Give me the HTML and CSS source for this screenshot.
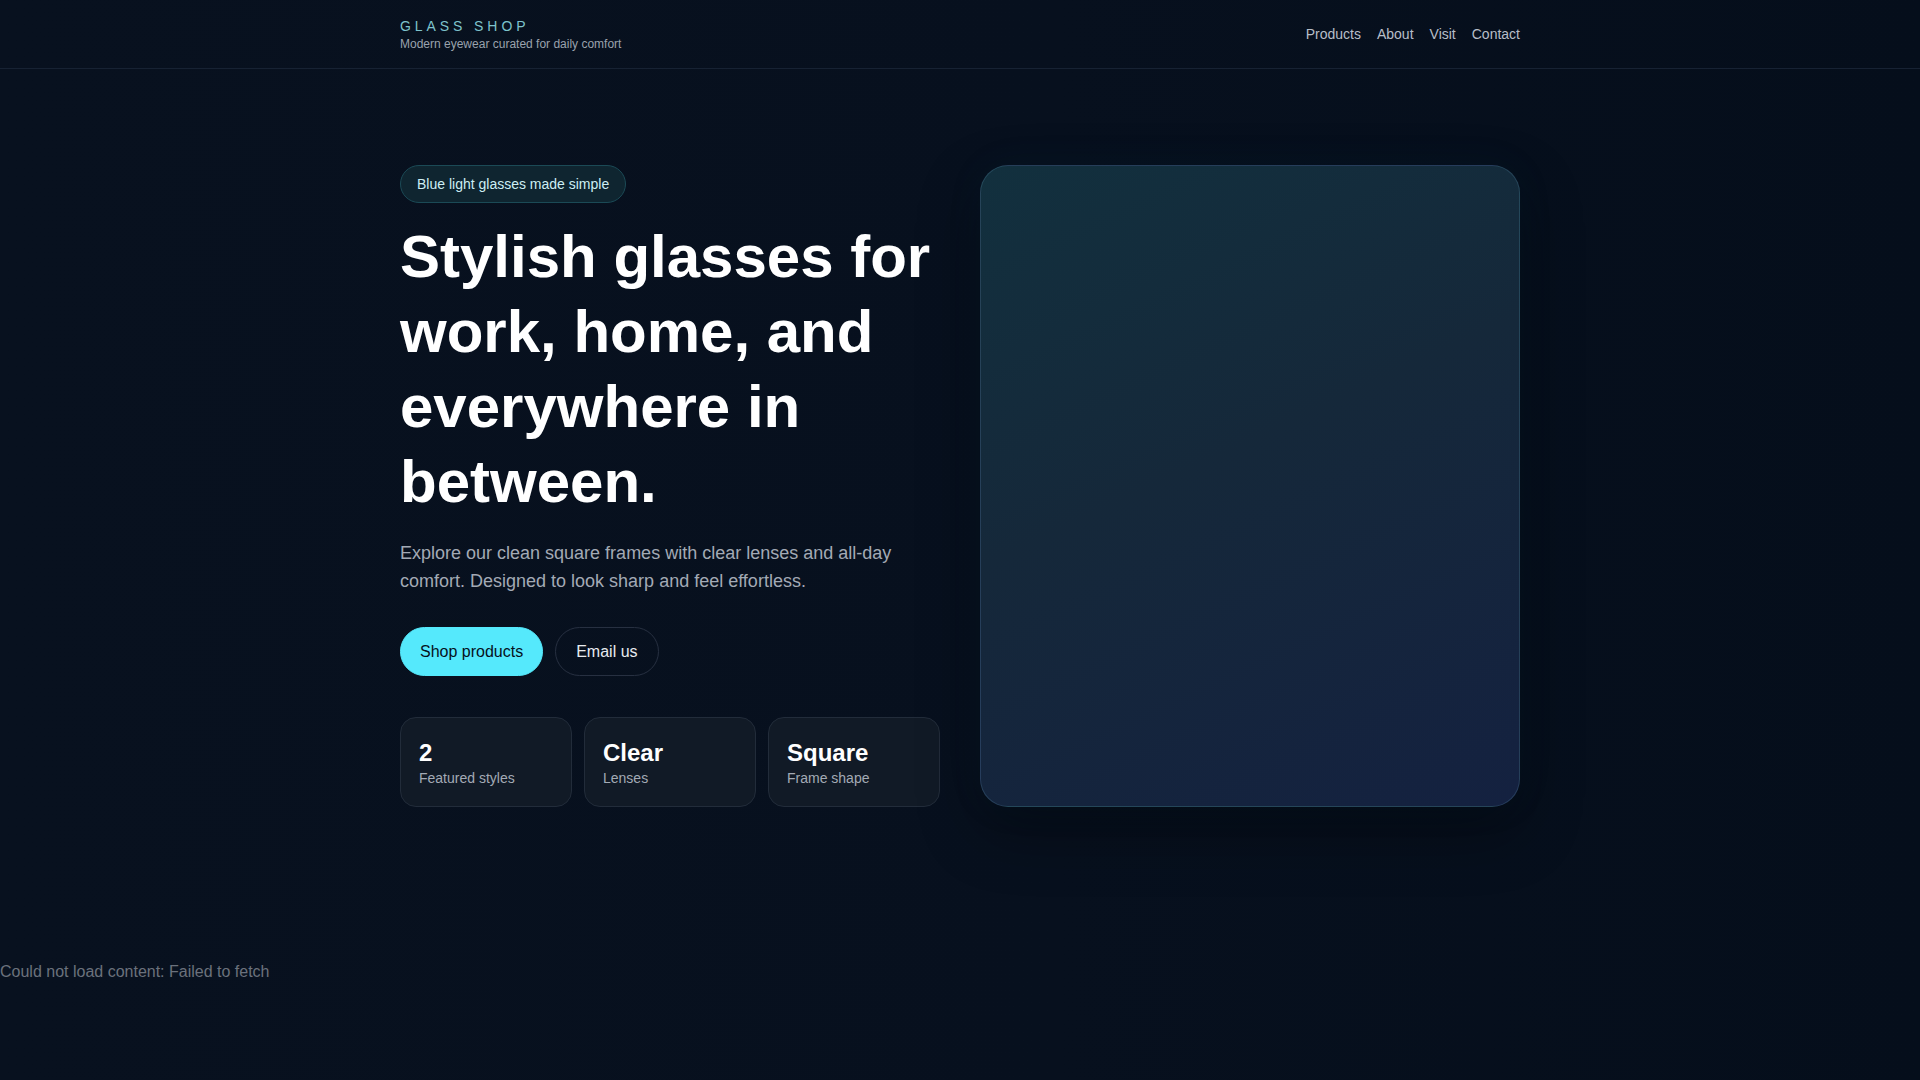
FILE: index.html
```html
<!DOCTYPE html>
<html lang="en">
<head>
<meta charset="utf-8">
<title>Glass Shop</title>
<link rel="stylesheet" href="styles.css">
</head>
<body>
<header class="site-header">
  <div class="container header-inner">
    <div class="brand">
      <div class="brand-name">GLASS SHOP</div>
      <div class="brand-tag">Modern eyewear curated for daily comfort</div>
    </div>
    <nav class="nav">
      <a href="#products">Products</a>
      <a href="#about">About</a>
      <a href="#visit">Visit</a>
      <a href="#contact">Contact</a>
    </nav>
  </div>
</header>
<main class="hero">
  <div class="container hero-grid">
    <div class="hero-copy">
      <span class="badge">Blue light glasses made simple</span>
      <h1 class="hero-title">Stylish glasses for work, home, and everywhere in between.</h1>
      <p class="hero-text">Explore our clean square frames with clear lenses and all-day comfort. Designed to look sharp and feel effortless.</p>
      <div class="actions">
        <a class="btn btn-primary" href="#products">Shop products</a>
        <a class="btn btn-ghost" href="#contact">Email us</a>
      </div>
      <div class="stats">
        <div class="stat"><div class="stat-value">2</div><div class="stat-label">Featured styles</div></div>
        <div class="stat"><div class="stat-value">Clear</div><div class="stat-label">Lenses</div></div>
        <div class="stat"><div class="stat-value">Square</div><div class="stat-label">Frame shape</div></div>
      </div>
    </div>
    <div class="hero-visual"></div>
  </div>
</main>
<div class="load-error">Could not load content: Failed to fetch</div>
</body>
</html>
```
FILE: styles.css
```css
* { box-sizing: border-box; }
html, body { margin: 0; padding: 0; }
body {
  min-height: 1080px;
  font-family: "Liberation Sans", Arial, sans-serif;
  color: #ffffff;
  background: linear-gradient(90deg, #08111f 0%, #07101e 55%, #050e1b 100%);
}
a { text-decoration: none; color: inherit; }
.container { width: 1120px; margin: 0 auto; }

.site-header { border-bottom: 1px solid #172233; }
.header-inner {
  height: 68px;
  display: flex;
  align-items: center;
  justify-content: space-between;
}
.brand { display: flex; flex-direction: column; }
.brand-name {
  font-size: 14px;
  line-height: 20px;
  letter-spacing: 0.28em;
  color: #7ec3cc;
}
.brand-tag {
  font-size: 12px;
  line-height: 16px;
  color: #9aa2ad;
}
.nav { display: flex; gap: 16px; }
.nav a { font-size: 14px; line-height: 20px; color: #b7bec8; }

.hero { padding: 96px 0 96px; }
.hero-grid {
  display: grid;
  grid-template-columns: 1fr 1fr;
  gap: 40px;
}
.hero-copy { display: flex; flex-direction: column; align-items: flex-start; }
.badge {
  display: inline-block;
  font-size: 14px;
  line-height: 20px;
  padding: 8px 16px;
  border: 1px solid #1b4a56;
  background: #0f2530;
  color: #cdeef4;
  border-radius: 999px;
  margin-bottom: 16px;
}
.hero-title {
  margin: 0 0 20px;
  font-size: 60px;
  line-height: 75px;
  font-weight: 700;
  color: #ffffff;
}
.hero-text {
  margin: 0 0 32px;
  font-size: 18px;
  line-height: 28px;
  color: #a3aab5;
}
.actions { display: flex; gap: 12px; margin-bottom: 41px; }
.btn {
  display: inline-block;
  font-size: 16px;
  line-height: 21px;
  padding: 13px 19px;
  border-radius: 999px;
  border: 1px solid transparent;
}
.btn-primary { background: #55e9fc; border-color: #55e9fc; color: #06111d; }
.btn-ghost { border-color: #273041; color: #e8ebf0; padding: 13px 20px; }

.stats {
  align-self: stretch;
  display: grid;
  grid-template-columns: repeat(3, 1fr);
  gap: 12px;
}
.stat {
  background: #111a26;
  border: 1px solid #222c3a;
  border-radius: 16px;
  padding: 19px 18px 18px;
}
.stat-value { font-size: 24px; line-height: 31px; font-weight: 700; color: #ffffff; }
.stat-label { font-size: 14px; line-height: 20px; color: #a3aab5; }

.hero-visual {
  border-radius: 28px;
  border: 1px solid rgba(110, 170, 205, 0.2);
  background: linear-gradient(155deg, #12303e 0%, #15283a 45%, #142140 100%);
  box-shadow: 0 24px 60px rgba(0, 0, 0, 0.35), 0 0 40px rgba(40, 120, 160, 0.06);
}

.load-error {
  margin-top: 60px;
  font-size: 16px;
  line-height: 18px;
  color: #6b717c;
}
```
